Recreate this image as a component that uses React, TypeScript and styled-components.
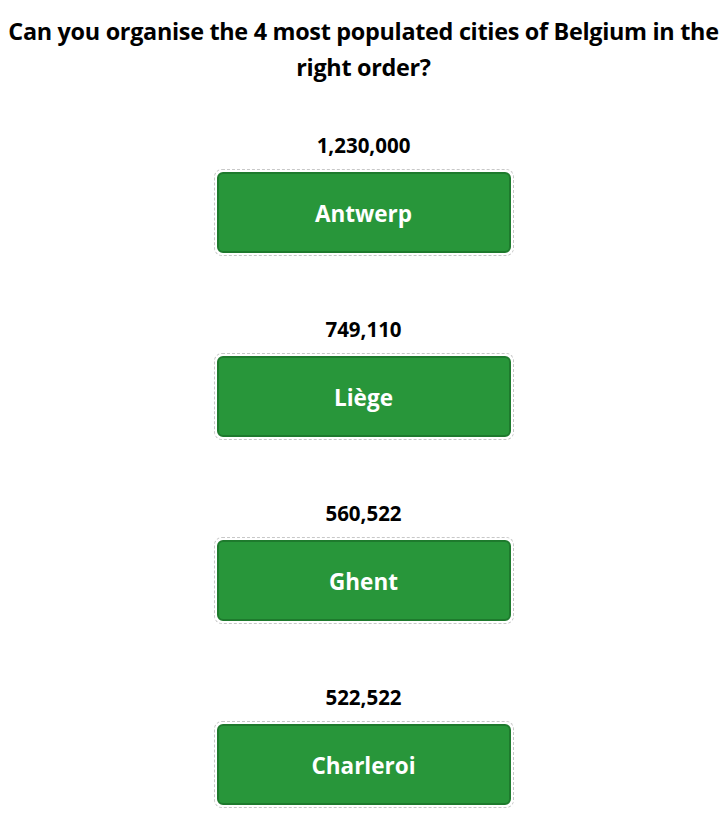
import React from "react";
import styled, { createGlobalStyle } from "styled-components";

const Global = createGlobalStyle`
  html, body { margin: 0; padding: 0; background: #fff; }
  body { font-family: "Open Sans", "Noto Sans", "Liberation Sans", sans-serif; color: #000; }
`;

const Page = styled.div`
  padding-top: 13px;
  display: flex;
  flex-direction: column;
  align-items: center;
`;

const Title = styled.h1`
  margin: 0;
  font-size: 23.4px;
  line-height: 36px;
  font-weight: 700;
  text-align: center;
  letter-spacing: -0.3px;
  width: 727px;
`;

const List = styled.div`
  margin-top: 48px;
  display: flex;
  flex-direction: column;
  align-items: center;
  gap: 61px;
`;

const Item = styled.div`
  display: flex;
  flex-direction: column;
  align-items: center;
`;

const Value = styled.div`
  font-size: 20.5px;
  line-height: 24px;
  font-weight: 700;
  margin-bottom: 12px;
`;

const Slot = styled.div`
  box-sizing: border-box;
  width: 300px;
  height: 87px;
  border: 1px dashed #c8c8c8;
  border-radius: 8px;
  padding: 2px;
  display: flex;
`;

const Card = styled.div`
  flex: 1;
  box-sizing: border-box;
  background: #28963a;
  border: 2px solid #1e7a2d;
  border-radius: 6px;
  color: #fff;
  font-size: 22.5px;
  font-weight: 700;
  padding-top: 2px;
  display: flex;
  align-items: center;
  justify-content: center;
`;

const cities = [
  { value: "1,230,000", name: "Antwerp" },
  { value: "749,110", name: "Liège" },
  { value: "560,522", name: "Ghent" },
  { value: "522,522", name: "Charleroi" },
];

export default function App() {
  return (
    <>
      <Global />
      <Page>
        <Title>Can you organise the 4 most populated cities of Belgium in the right order?</Title>
        <List>
          {cities.map((c) => (
            <Item key={c.name}>
              <Value>{c.value}</Value>
              <Slot>
                <Card>{c.name}</Card>
              </Slot>
            </Item>
          ))}
        </List>
      </Page>
    </>
  );
}
